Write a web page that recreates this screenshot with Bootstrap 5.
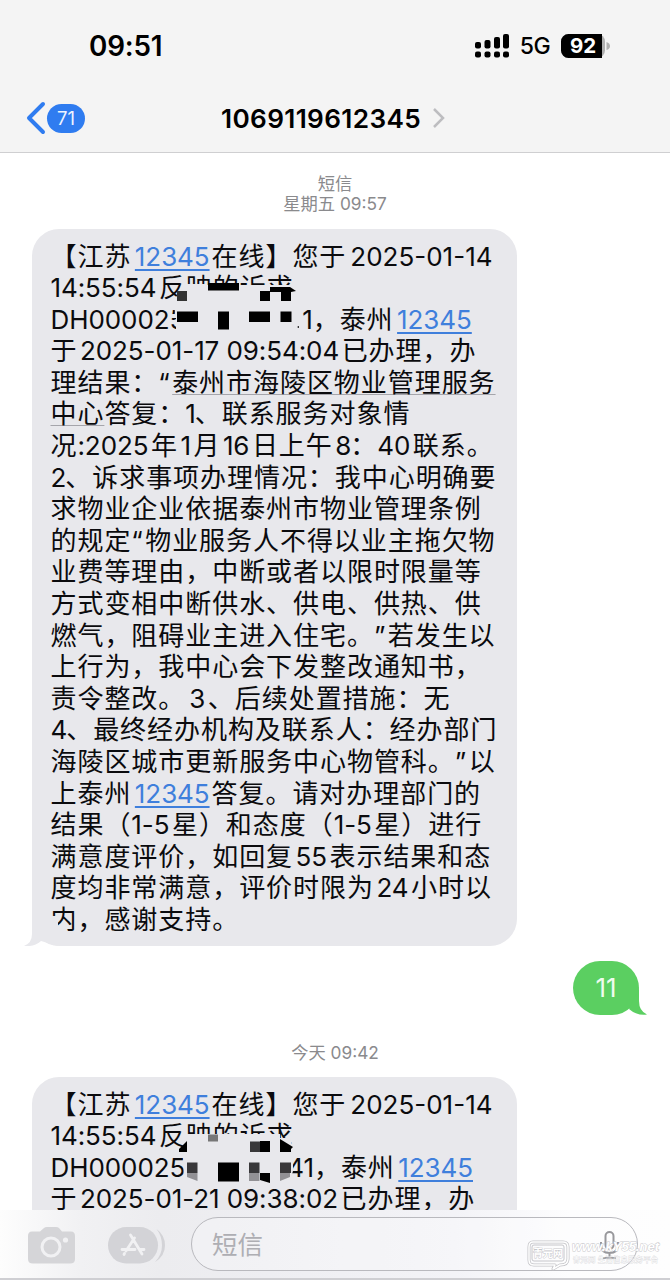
<!DOCTYPE html>
<html lang="zh-CN">
<head>
<meta charset="utf-8">
<meta name="viewport" content="width=device-width, initial-scale=1">
<title>短信</title>
<link rel="stylesheet" href="https://cdn.jsdelivr.net/npm/bootstrap@5.3.0/dist/css/bootstrap.min.css">
<style>
body{font-family:Inter,"Noto Sans CJK SC",sans-serif;background:#fff;color:#0b0b0e}
.phone{width:670px;height:1280px}
.topbar{height:153px;background:#f4f4f4;border-bottom:1px solid #cfcfd1;color:#000}
.statusbar{height:92px;padding:0 60px 0 89px}
.clock{font-size:27.8px;font-weight:600;letter-spacing:-.2px;line-height:30px}
.net{font-size:23px;font-weight:500;letter-spacing:-.6px;margin-left:9px;margin-right:11px}
.titlebar{height:52px;padding:0 26px}
.unread{width:38px;height:29px;margin-left:1px;background:#2f7cf0;color:#eef4ff;font-size:18.5px;line-height:29px}
.sender{font-size:26.2px;font-weight:600;letter-spacing:.35px;margin-left:136px;padding-top:1px}
.more{margin-left:11px}
.stamp{font-size:17.3px;line-height:20px;color:#8a8a8d}
.bubble{background:#e8e8ec;border-radius:27px;width:485px;margin-left:32px;padding:11.5px 0 9px 18.5px;font-size:26px;line-height:31.6px;letter-spacing:.95px;text-spacing-trim:space-all}
.bubble .ln{display:block;white-space:nowrap;height:31.6px}
.bubble .n,.bubble a{letter-spacing:-.08px}
.bubble a{color:#3f7fdc;text-decoration-thickness:1.5px;text-underline-offset:3px;margin:0 2px 0 3.5px}
.bubble .n{margin:0 2.5px}
.bubble .n.f{margin-left:0}
.bubble .n.p{margin-right:-1px}
.bubble .n.d{margin-left:4px;letter-spacing:0}
.bubble .q{letter-spacing:2.4px}
.place{text-decoration:underline;text-decoration-color:#a5a5ab;text-decoration-thickness:1px;text-underline-offset:2px;text-decoration-skip-ink:none}
.gap1,.gap2{display:inline-block}
.gap1{width:112px}.gap2{width:97px}
.bubble .ln .gap1+.n,.bubble .ln .gap2+.n{margin-right:0}
.over{position:absolute;left:128px}
.thread{height:1057px}
.reply{width:66px;height:54px;border-radius:27px;background:#5bcf61;color:#effbef;font-size:26px;line-height:54px;margin-right:31px}
.composer{height:70px;background:linear-gradient(90deg,#fdfdfd 0,#f1f1f3 12%,#ececef 24%,#eeeef2 40%,#f3f3f7 68%,#fdfdfe 85%,#fefefe 100%);border-bottom:2px solid #cfcfd3}
.field{width:447px;height:54px;border:1.5px solid #b9b9be;border-radius:27px;color:#aeaeb3;font-size:25.5px;line-height:54px;padding-left:20px;margin-left:26px;margin-top:7px;background:rgba(255,255,255,.25)}
.site text{fill:#fff;stroke:#c6c6ca;stroke-width:.9px;paint-order:stroke}
</style>
</head>
<body>
<div class="phone position-relative overflow-hidden d-flex flex-column">
<header class="topbar flex-shrink-0">
  <div class="statusbar d-flex align-items-center">
    <span class="clock">09:51</span>
    <svg class="ms-auto" width="36" height="24" viewBox="0 0 36 24"><g><rect x="0" y="8" width="6" height="6.5" rx="2"/><rect x="9.5" y="6" width="6" height="8.5" rx="2"/><rect x="19" y="3" width="6" height="11.500" rx="2"/><rect x="28" y="0" width="6" height="14.500" rx="2"/><rect x="0" y="17.500" width="6" height="6" rx="2"/><rect x="9.500" y="17.500" width="6" height="6" rx="2"/><rect x="19" y="17.500" width="6" height="6" rx="2"/><rect x="28" y="17.500" width="6" height="6" rx="2"/></g></svg>
    <span class="net">5G</span>
    <svg width="49" height="24" viewBox="0 0 49 24"><rect width="44" height="24" rx="7.500" fill="#b0b0b0"/><path d="M7.500 0H41V24H7.500A7.500 7.500 0 0 1 0 16.500V7.500A7.500 7.500 0 0 1 7.500 0Z"/><path d="M45.500 8Q49 9 49 12T45.500 16Z" fill="#b0b0b0"/><text x="22" y="19.300" text-anchor="middle" font-family="Inter" font-size="20.500" font-weight="700" fill="#fff">92</text></svg>
  </div>
  <div class="titlebar d-flex align-items-center">
    <svg width="20" height="34" viewBox="0 0 20 34"><path d="M17 3L3 17L17 31" fill="none" stroke="#2f7cf0" stroke-width="4" stroke-linecap="round" stroke-linejoin="round"/></svg>
    <span class="unread rounded-pill text-center">71</span>
    <span class="sender">1069119612345</span>
    <svg class="more" width="14" height="22" viewBox="0 0 14 22"><path d="M2 2L11 11L2 20" fill="none" stroke="#bdbdc0" stroke-width="2.500"/></svg>
  </div>
</header>
<main class="thread flex-shrink-0 overflow-hidden">
  <div class="stamp text-center" style="padding-top:21px">短信<br>星期五 09:57</div>
  <article class="bubble position-relative" style="margin-top:15px;height:717px">
    <span class="ln">【江苏<a href="#">12345</a>在线】您于<span class="n d">2025-01-14</span></span>
    <span class="ln"><span class="n f">14:55:54</span>反映的诉求</span>
    <span class="ln"><span class="n f">DH000025</span><i class="gap1"></i><span class="n">1</span>，泰州<a href="#">12345</a></span>
    <span class="ln">于<span class="n">2025-01-17 09:54:04</span>已办理，办</span>
    <span class="ln">理结果：<span class="q">“</span><span class="place">泰州市海陵区物业管理服务</span></span>
    <span class="ln"><span class="place">中心</span>答复：<span class="n f p">1</span>、联系服务对象情</span>
    <span class="ln">况<span class="n f">:2025</span>年<span class="n">1</span>月<span class="n">16</span>日上午<span class="n p">8</span>：<span class="n f">40</span>联系。</span>
    <span class="ln"><span class="n f p">2</span>、诉求事项办理情况：我中心明确要</span>
    <span class="ln">求物业企业依据泰州市物业管理条例</span>
    <span class="ln">的规定<span class="q">“</span>物业服务人不得以业主拖欠物</span>
    <span class="ln">业费等理由，中断或者以限时限量等</span>
    <span class="ln">方式变相中断供水、供电、供热、供</span>
    <span class="ln">燃气，阻碍业主进入住宅。<span class="q">”</span>若发生以</span>
    <span class="ln">上行为，我中心会下发整改通知书，</span>
    <span class="ln">责令整改。<span class="n d">3</span>、后续处置措施：无</span>
    <span class="ln"><span class="n f p">4</span>、最终经办机构及联系人：经办部门</span>
    <span class="ln">海陵区城市更新服务中心物管科。<span class="q">”</span>以</span>
    <span class="ln">上泰州<a href="#">12345</a>答复。请对办理部门的</span>
    <span class="ln">结果（<span class="n f">1-5</span>星）和态度（<span class="n f">1-5</span>星）进行</span>
    <span class="ln">满意度评价，如回复<span class="n">55</span>表示结果和态</span>
    <span class="ln">度均非常满意，评价时限为<span class="n">24</span>小时以</span>
    <span class="ln">内，感谢支持。</span>
    <svg class="over" style="top:41px" width="160" height="70" viewBox="160 270 160 70"><path d="M174 300L185 284H207V285H290L299 290V332H176V318H171V314H175Z" fill="#e8e8ec"/><path d="M208 283h31v7.500h-31zM270 287h20l6 4-5 1v9h-10v-9h-11zM260 291h10v10h-10zM177 311.500h21v10.500h-21zM218 311.500h11v18h-11zM249 311.500h21v10.500h-21zM280.500 311.500h11v10.500h-11z"/><path d="M177 291h10v10h-10z" fill="#333"/><path d="M297 327l2-1v2z"/></svg>
    <svg class="position-absolute" style="left:-8px;bottom:0" width="34" height="30" viewBox="0 0 34 30"><path d="M8 0V18Q8 27 0 30Q10 31 17 25L34 30V0Z" fill="#e8e8ec"/></svg>
  </article>
  <div class="d-flex justify-content-end" style="margin-top:15px"><div class="reply text-center position-relative">11<svg class="position-absolute" style="right:-8px;bottom:0" width="28" height="30" viewBox="0 0 28 30"><path d="M20 3V16Q20 26 28 29.500Q18 31 10 24Z" fill="#5bcf61"/></svg></div></div>
  <div class="stamp text-center" style="margin-top:28px">今天 09:42</div>
  <article class="bubble position-relative" style="margin-top:14px;height:200px">
    <span class="ln">【江苏<a href="#">12345</a>在线】您于<span class="n d">2025-01-14</span></span>
    <span class="ln"><span class="n f">14:55:54</span>反映的诉求</span>
    <span class="ln"><span class="n f">DH000025</span><i class="gap2"></i><span class="n">41</span>，泰州<a href="#">12345</a></span>
    <span class="ln">于<span class="n">2025-01-21 09:38:02</span>已办理，办</span>
    <svg class="over" style="top:43px" width="180" height="90" viewBox="160 1120 180 90"><path d="M183 1151L187 1134H280V1138H290L293 1148V1171L290 1181H184Z" fill="#e8e8ec"/><path d="M179 1149l8-8v11h-8zM260 1141h10v11h-10zM280 1139l13 8-2 2v3h-11zM218 1162.500h21v19h-21zM260 1173h10v10l-10-3z"/><path d="M250 1141.500h10v10.500h-10zM187 1162.500h10.500v10.500h-10.500zM249 1162.500h10.500v10.500h-10.500zM280 1162.500h11v10.500h-11z" fill="#39383a"/><path d="M187 1173h10.500v8l-10.500-4zM249 1173h10.500v8h-10.500zM280 1173h10v4l-10 4z" fill="#929195"/><path d="M208 1134.500h10v7h-10z" fill="#777"/></svg>
  </article>
</main>
<footer class="composer flex-shrink-0 d-flex position-relative">
  <svg style="margin-left:28px;margin-top:17px" width="48" height="38" viewBox="0 0 48 38"><path d="M4 4.500H12L16 1Q17 0 19 0H28Q30 0 31 1L34 4.500H43Q47 4.500 47 9V32Q47 36.500 42 36.500H5Q0 36.500 0 32V9Q0 4.500 4 4.500Z" fill="#d5d5d8"/><circle cx="23" cy="20" r="9" fill="none" stroke="#f1f1f3" stroke-width="3"/><circle cx="37.500" cy="13" r="2.600" fill="#f1f1f3"/></svg>
  <svg style="margin-left:32px;margin-top:17px" width="57" height="38" viewBox="0 0 57 38"><rect width="50" height="36.500" rx="18.200" fill="#d3d3d7"/><path d="M48.500 2Q57 8 57 18.500T47 35Q54 28 54 18.500T48.500 2Z" fill="#d3d3d7"/><path d="M26.500 11L18 24M22.500 8L34 27M14 22.500H27M32 22.500H36M16 27.500L16.500 26.500" fill="none" stroke="#f1f1f3" stroke-width="2.800" stroke-linecap="round"/></svg>
  <div class="field">短信</div>
  <svg class="position-absolute site" style="left:520px;top:15px" width="150" height="52" viewBox="520 1225 150 52"><g fill="none" stroke="#98989c" stroke-width="2"><rect x="605.500" y="1232" width="8" height="17" rx="4"/><path d="M601 1242V1244Q601 1253 609.500 1253T618 1244V1242M609.500 1253V1258M603 1258H616"/></g>
  <g fill="none" stroke-linejoin="round"><path d="M533 1242H563Q568 1242 568 1247V1259Q568 1265 560 1265L553 1269L555 1265H534Q529 1265 529 1260V1247Q529 1242 533 1242Z" stroke="#c3c3c7" stroke-width="3"/><path d="M533 1242H563Q568 1242 568 1247V1259Q568 1265 560 1265L553 1269L555 1265H534Q529 1265 529 1260V1247Q529 1242 533 1242Z" stroke="#fff" stroke-width="1.500"/><rect x="532" y="1245" width="32" height="16" rx="2" stroke="#c6c6ca"/></g>
  <text x="533" y="1257" font-family="Noto Sans CJK SC" font-size="10" font-weight="700" textLength="30">青元网</text>
  <text x="572" y="1251" font-family="Liberation Sans" font-size="13" font-style="italic" font-weight="700" textLength="87" lengthAdjust="spacingAndGlyphs">www.kY55.net</text>
  <text x="573" y="1262" font-family="Noto Sans CJK SC" font-size="7" textLength="85" opacity=".55">青元网 生活信息服务平台</text></svg>
</footer>
</div>
<script src="https://cdn.jsdelivr.net/npm/bootstrap@5.3.0/dist/js/bootstrap.bundle.min.js"></script>
</body>
</html>
